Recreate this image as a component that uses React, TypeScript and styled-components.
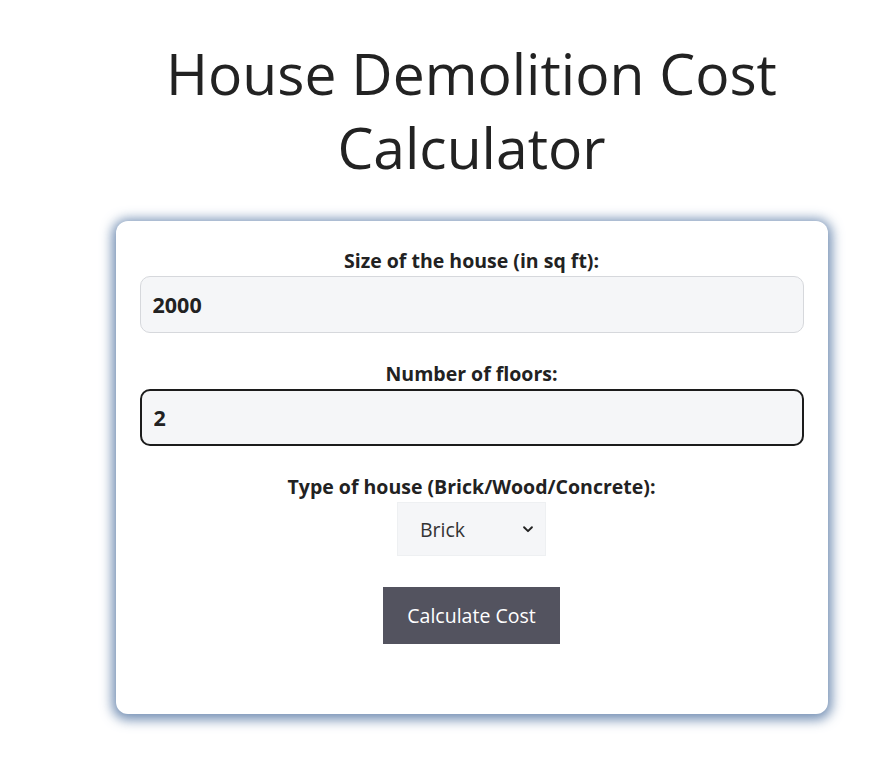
import styled, { createGlobalStyle } from "styled-components";
import { useState } from "react";

const GlobalStyle = createGlobalStyle`
  body {
    margin: 0;
    background: #ffffff;
    font-family: "Open Sans", "Noto Sans", sans-serif;
    color: #222222;
  }
`;

const Page = styled.div`
  display: flex;
  flex-direction: column;
  align-items: center;
  padding-left: 54px;
  padding-bottom: 40px;
`;

const Title = styled.h1`
  margin: 37px 0 37px;
  font-size: 57px;
  line-height: 73.6px;
  font-weight: 400;
  text-align: center;
  color: #222222;
  max-width: 700px;
`;

const Card = styled.form`
  box-sizing: border-box;
  width: 712px;
  padding: 26px 24px 70px;
  background: #ffffff;
  border-radius: 12px;
  box-shadow: 0 2px 12px 4px rgba(84, 118, 162, 0.8);
  display: flex;
  flex-direction: column;
  align-items: center;
`;

const Group = styled.div`
  width: 100%;
  display: flex;
  flex-direction: column;
  align-items: center;
  margin-bottom: 27px;
`;

const Label = styled.label`
  font-size: 19.5px;
  line-height: 27px;
  font-weight: 700;
  margin-bottom: 2px;
`;

const Input = styled.input<{ $focused?: boolean }>`
  box-sizing: border-box;
  width: 100%;
  height: 57px;
  padding: 0 12px;
  font-family: inherit;
  font-size: 21.5px;
  font-weight: 700;
  color: #222222;
  background: #f5f6f8;
  border: ${(p) => (p.$focused ? "2px solid #1c1c1c" : "1px solid #d6d8dc")};
  border-radius: 10px;
  outline: none;
`;

const SelectWrap = styled.div`
  position: relative;
  width: 149px;
  height: 54px;
`;

const Select = styled.select`
  box-sizing: border-box;
  width: 100%;
  height: 100%;
  padding: 0 0 0 22px;
  font-family: inherit;
  font-size: 19.5px;
  color: #333333;
  background: #f5f6f8;
  border: 1px solid #eef0f2;
  border-radius: 0;
  appearance: none;
  outline: none;
`;

const Chevron = styled.svg`
  position: absolute;
  right: 11px;
  top: 50%;
  transform: translateY(-50%);
  pointer-events: none;
`;

const Button = styled.button`
  margin-top: 4px;
  width: 177px;
  height: 57px;
  border: none;
  background: #53535f;
  color: #ffffff;
  font-family: inherit;
  font-size: 19.5px;
  cursor: pointer;
`;

const App = () => {
  const [size, setSize] = useState("2000");
  const [floors, setFloors] = useState("2");
  const [type, setType] = useState("Brick");

  return (
    <Page>
      <GlobalStyle />
      <Title>House Demolition Cost Calculator</Title>
      <Card onSubmit={(e) => e.preventDefault()}>
        <Group>
          <Label htmlFor="size">Size of the house (in sq ft):</Label>
          <Input id="size" value={size} onChange={(e) => setSize(e.target.value)} />
        </Group>
        <Group>
          <Label htmlFor="floors">Number of floors:</Label>
          <Input id="floors" $focused value={floors} onChange={(e) => setFloors(e.target.value)} />
        </Group>
        <Group>
          <Label htmlFor="type">Type of house (Brick/Wood/Concrete):</Label>
          <SelectWrap>
            <Select id="type" value={type} onChange={(e) => setType(e.target.value)}>
              <option>Brick</option>
              <option>Wood</option>
              <option>Concrete</option>
            </Select>
            <Chevron width="14" height="14" viewBox="0 0 16 16">
              <path d="M3.5 6l4.5 4.5 4.5-4.5" fill="none" stroke="#222" strokeWidth="2.2" strokeLinecap="round" strokeLinejoin="round" />
            </Chevron>
          </SelectWrap>
        </Group>
        <Button type="submit">Calculate Cost</Button>
      </Card>
    </Page>
  );
};

export default App;
